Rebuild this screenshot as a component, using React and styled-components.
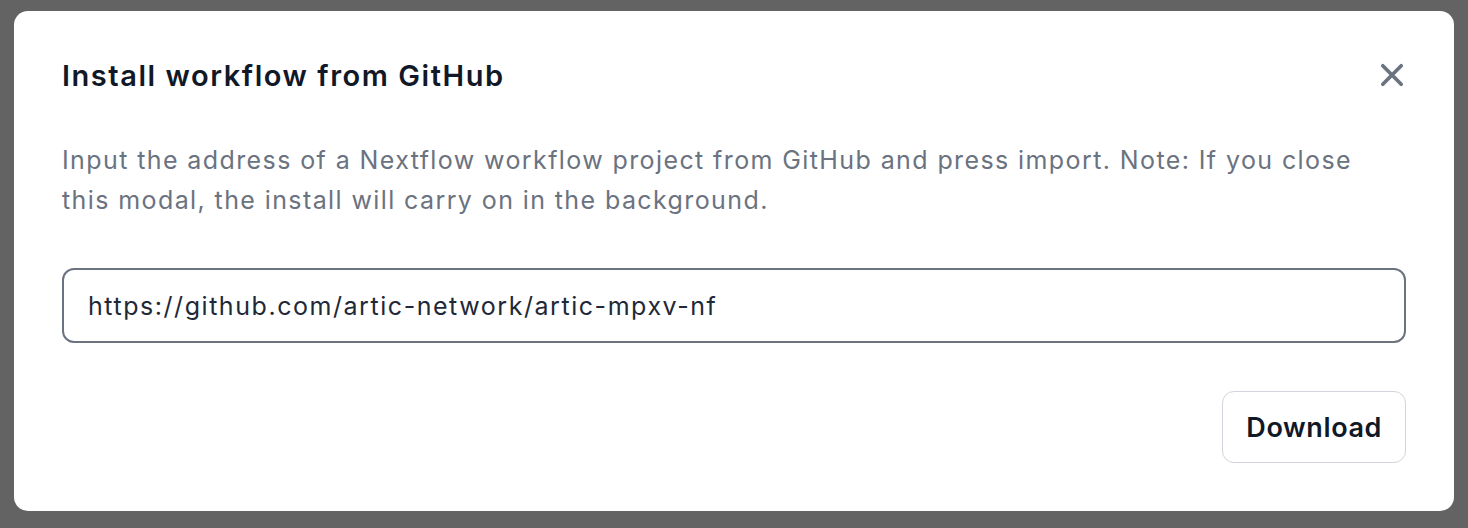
import React from "react";
import styled, { createGlobalStyle } from "styled-components";

const GlobalStyle = createGlobalStyle`
  html, body {
    margin: 0;
    padding: 0;
    background: #636363;
    font-family: Inter, "Noto Sans", sans-serif;
  }
`;

const Overlay = styled.div`
  width: 1468px;
  height: 528px;
  box-sizing: border-box;
  padding: 11px 14px 17px;
  background: #636363;
`;

const Modal = styled.div`
  background: #fff;
  border-radius: 14px;
  height: 100%;
  box-sizing: border-box;
  padding: 48px;
  display: flex;
  flex-direction: column;
`;

const Header = styled.div`
  display: flex;
  align-items: center;
  justify-content: space-between;
  height: 32px;
`;

const Title = styled.h3`
  margin: 0;
  font-size: 29px;
  font-weight: 600;
  color: #111827;
  letter-spacing: 1.55px;
`;

const Close = styled.button`
  border: none;
  background: none;
  padding: 0;
  width: 28px;
  height: 28px;
  display: flex;
  align-items: center;
  justify-content: center;
  color: #6b7280;
  cursor: pointer;
`;

const Description = styled.p`
  margin: 49px 0 0;
  font-size: 25px;
  line-height: 40px;
  letter-spacing: 1.4px;
  color: #6b7280;
`;

const Input = styled.input`
  margin-top: 48px;
  height: 75px;
  box-sizing: border-box;
  border: 2px solid #6b7280;
  border-radius: 12px;
  padding: 0 24px;
  font-family: Inter, "Noto Sans", sans-serif;
  font-size: 25px;
  letter-spacing: 1.55px;
  color: #1f2937;
  outline: none;
`;

const Footer = styled.div`
  margin-top: auto;
  display: flex;
  justify-content: flex-end;
`;

const Button = styled.button`
  height: 72px;
  padding: 0 23px;
  border: 1.5px solid #d1d5db;
  border-radius: 12px;
  background: #fff;
  font-family: Inter, "Noto Sans", sans-serif;
  font-size: 27px;
  font-weight: 600;
  letter-spacing: 0.6px;
  color: #111827;
  cursor: pointer;
`;

const App = () => {
  return (
    <>
      <GlobalStyle />
      <Overlay>
        <Modal>
          <Header>
            <Title>Install workflow from GitHub</Title>
            <Close aria-label="Close">
              <svg width="26" height="26" viewBox="0 0 24 24" fill="none" stroke="currentColor" strokeWidth="3.4" strokeLinecap="round">
                <path d="M3.5 3.5l17 17M20.5 3.5l-17 17" />
              </svg>
            </Close>
          </Header>
          <Description>
            Input the address of a Nextflow workflow project from GitHub and press import. Note: If you close this modal, the install will carry on in the background.
          </Description>
          <Input defaultValue="https://github.com/artic-network/artic-mpxv-nf" />
          <Footer>
            <Button>Download</Button>
          </Footer>
        </Modal>
      </Overlay>
    </>
  );
};

export default App;
